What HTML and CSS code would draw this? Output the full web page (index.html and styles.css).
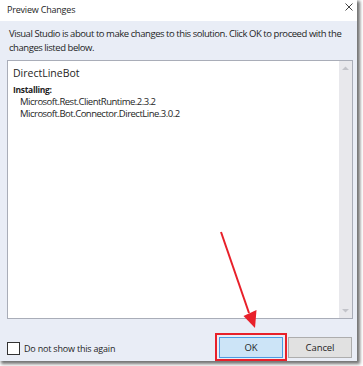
FILE: index.html
```html
<!DOCTYPE html>
<html>
<head>
<meta charset="utf-8">
<link rel="stylesheet" href="styles.css">
</head>
<body>
<div class="window">
  <div class="titlebar">
    <span class="title">Preview Changes</span>
    <svg class="close" width="8" height="8" viewBox="0 0 8 8"><path d="M0.5 0.5 L7.5 7.5 M7.5 0.5 L0.5 7.5" stroke="#444" stroke-width="1" fill="none"/></svg>
  </div>
  <div class="body">
    <p class="message">Visual Studio is about to make changes to this solution. Click OK to proceed with the changes listed below.</p>
    <div class="listbox">
      <div class="list-content">
        <div class="project">DirectLineBot</div>
        <div class="section">Installing:</div>
        <div class="item">Microsoft.Rest.ClientRuntime.2.3.2</div>
        <div class="item">Microsoft.Bot.Connector.DirectLine.3.0.2</div>
      </div>
      <div class="scrollbar">
        <svg width="13" height="10" viewBox="0 0 13 10"><path d="M3 7 L6.5 3.5 L10 7 Z" fill="#c2c3c9"/></svg>
        <svg width="13" height="10" viewBox="0 0 13 10"><path d="M3 3 L6.5 6.5 L10 3 Z" fill="#c2c3c9"/></svg>
      </div>
    </div>
    <div class="footer">
      <label class="check"><span class="box"></span><span>Do not show this again</span></label>
      <div class="buttons">
        <button class="btn ok">OK</button>
        <button class="btn">Cancel</button>
      </div>
    </div>
  </div>
</div>
<div class="highlight"></div>
<svg class="arrow" width="363" height="366" viewBox="0 0 363 366">
  <line x1="221" y1="232" x2="249" y2="313" stroke="#e8202a" stroke-width="2"/>
  <path d="M243.5 316 L256.5 310 L255 328 Z" fill="#e8202a"/>
</svg>
</body>
</html>
```
FILE: styles.css
```css
html, body {
  margin: 0;
  padding: 0;
  background: #ffffff;
}
body {
  width: 363px;
  height: 366px;
  position: relative;
  overflow: hidden;
  font-family: "Open Sans", "Noto Sans", sans-serif;
  color: #1e1e1e;
}
.window {
  width: 357px;
  height: 361px;
  display: flex;
  flex-direction: column;
  background: #e9edf6;
  box-shadow: 2px 2px 3px 1px rgba(0, 0, 0, 0.55);
}
.titlebar {
  height: 21px;
  flex: none;
  background: #ffffff;
  display: flex;
  align-items: center;
  justify-content: space-between;
  padding: 0 4px 3px 7px;
  box-sizing: border-box;
}
.title {
  font-size: 9px;
  letter-spacing: -0.2px;
}
.close {
  margin-bottom: 4px;
}
.body {
  flex: 1;
  display: flex;
  flex-direction: column;
  padding: 6px 4px 0 7px;
}
.message {
  margin: 0 0 0 2px;
  font-size: 9.5px;
  line-height: 14px;
  letter-spacing: -0.45px;
  height: 28px;
}
.listbox {
  margin-top: 5px;
  height: 259px;
  box-sizing: border-box;
  border: 1px solid #a9adb8;
  background: #ffffff;
  display: flex;
}
.list-content {
  flex: 1;
  padding: 4px 0 0 5px;
}
.project {
  font-size: 10.5px;
  line-height: 16px;
}
.section {
  font-size: 8.5px;
  font-weight: 700;
  line-height: 12px;
  margin-top: 3px;
  letter-spacing: -0.3px;
}
.item {
  font-size: 9.5px;
  line-height: 12px;
  padding-left: 7px;
  letter-spacing: -0.5px;
}
.scrollbar {
  width: 13px;
  background: #e8e8ec;
  display: flex;
  flex-direction: column;
  justify-content: space-between;
  padding: 2px 0;
}
.scrollbar svg {
  display: block;
}
.footer {
  margin-top: 18px;
  display: flex;
  align-items: center;
  justify-content: space-between;
}
.check {
  display: flex;
  align-items: center;
  gap: 4px;
  font-size: 9px;
  letter-spacing: -0.2px;
  padding-top: 2px;
}
.box {
  width: 11px;
  height: 11px;
  border: 1px solid #333;
  background: #fff;
}
.buttons {
  display: flex;
  gap: 5px;
  padding-right: 1px;
}
.btn {
  width: 64px;
  height: 21px;
  box-sizing: border-box;
  border: 1px solid #adadad;
  background: #e1e1e1;
  font-family: "Open Sans", "Noto Sans", sans-serif;
  font-size: 9.5px;
  letter-spacing: -0.1px;
  color: #1e1e1e;
  padding: 0;
}
.btn.ok {
  background: #cce4f7;
  border-color: #4b9be4;
}
.highlight {
  position: absolute;
  left: 215px;
  top: 333px;
  width: 72px;
  height: 28px;
  box-sizing: border-box;
  border: 2px solid #e8202a;
}
.arrow {
  position: absolute;
  left: 0;
  top: 0;
}
```
